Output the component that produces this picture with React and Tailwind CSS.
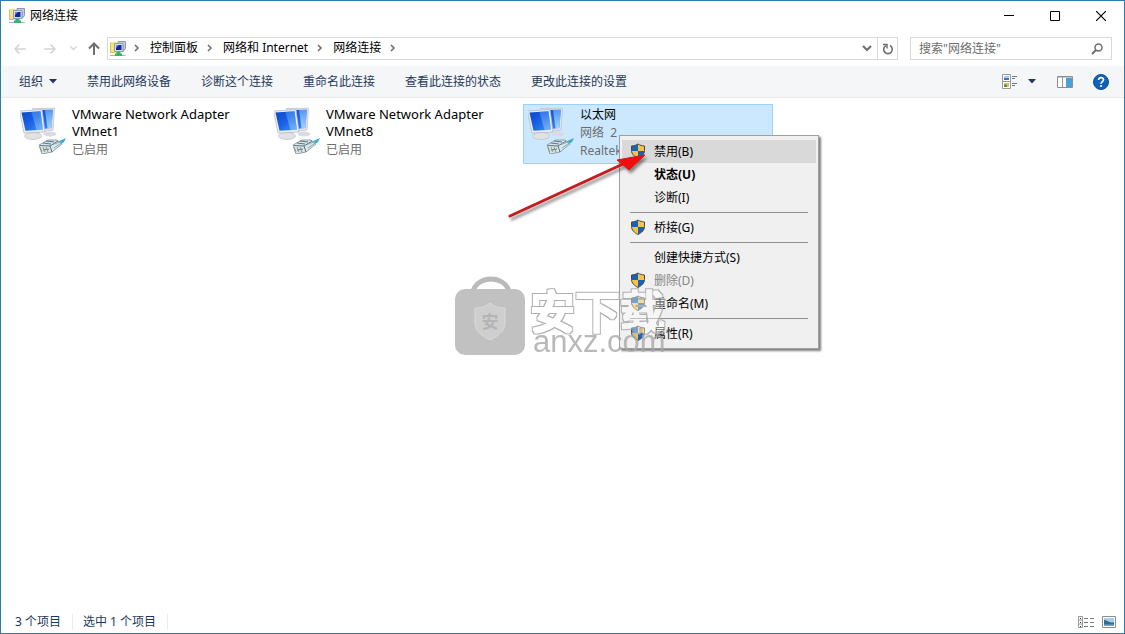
import React from 'react';

const crumbs = ['控制面板', '网络和 Internet', '网络连接'];
const commands = ['禁用此网络设备', '诊断这个连接', '重命名此连接', '查看此连接的状态', '更改此连接的设置'];

function FolderNetIcon() {
  return (
    <svg width="16" height="16" viewBox="0 0 16 16" className="shrink-0" aria-hidden="true">
      <path d="M0 1.500 5 .5l2 1v10.500H0z" fill="#f5e08a" />
      <path d="M.5 1.500v10h4" fill="none" stroke="#d9c05e" />
      <path d="M8 .500h7.500v7L13 10.500V4L8 3z" fill="#c3cbdd" stroke="#8b97b3" />
      <path d="M4.500 2.500h8.500v8H4.500z" fill="#d8e0f0" stroke="#8d99b8" />
      <path d="M6 4h5.500v5H6z" fill="#1722a0" />
      <path d="M6 4h3L6 7z" fill="#5c86e8" />
      <path d="M6.500 11h4v1.500H12v2.500H5v-2.500h1.500z" fill="#2fb56c" />
      <path d="M0 14.500h5M12 14.500h3.500" stroke="#a4b3b4" />
    </svg>
  );
}

function Shield() {
  return (
    <svg width="16" height="16" viewBox="0 1 16 16" className="shrink-0 overflow-visible" aria-hidden="true">
      <path d="M8 1C6 2.300 4 2.800 1.500 3v5H8z" fill="#1565b4" />
      <path d="M8 1c2 1.300 4 1.800 6.500 2v5H8z" fill="#f8c24c" />
      <path d="M1.500 8H8v7.500C4.500 13.800 1.600 11.400 1.500 8z" fill="#f8c24c" />
      <path d="M14.500 8H8v7.500c3.500-1.700 6.400-4.100 6.500-7.500z" fill="#1565b4" />
      <path d="M8 1C6 2.300 4 2.800 1.500 3v4.500C1.500 11 4.500 13.800 8 15.500c3.500-1.700 6.500-4.500 6.500-8V3C12 2.800 10 2.300 8 1z" fill="none" stroke="#4b4a44" />
    </svg>
  );
}

function AdapterIcon() {
  return (
    <svg width="48" height="48" viewBox="0 0 48 48" className="shrink-0" aria-hidden="true">
      <defs>
        <linearGradient id="screen" x1="0" y1="0" x2="1" y2="1">
          <stop offset="0" stopColor="#0b46c4" />
          <stop offset=".5" stopColor="#1a62e6" />
          <stop offset="1" stopColor="#3f97f5" />
        </linearGradient>
        <linearGradient id="glare" x1="0" y1="0" x2="0" y2="1">
          <stop offset="0" stopColor="#5fa8f8" />
          <stop offset="1" stopColor="#c4e3fd" />
        </linearGradient>
      </defs>
      <ellipse cx="30" cy="28" rx="6.500" ry="2.500" fill="#d9dbe0" />
      <path d="m12.500 2.500 22-.3-1.500 21.800-15 2z" fill="#e3e5ea" stroke="#bfc3cb" strokeWidth=".8" />
      <path d="m14 4 18.800-.3L31.500 22 18 23.500z" fill="url(#screen)" />
      <path d="m25 3.900 7.800-.2L31.500 22l-4 .5z" fill="url(#glare)" opacity=".8" />
      <path d="m10 25 8-1 1 5c-2 2-6 2-8 0z" fill="#b9bdc5" />
      <ellipse cx="13" cy="30" rx="8.500" ry="3.500" fill="#e0e2e6" stroke="#c1c5cc" strokeWidth=".8" />
      <path d="m-.5 5 22.500-1.500 3 22.500-21 1z" fill="#eceef1" stroke="#b8bdc7" strokeWidth=".8" />
      <path d="m1.500 6.500 19-1.300 2.500 18.500-17.500 1z" fill="url(#screen)" />
      <path d="m11.500 5.900 9-.7 2.500 18.500-6.500.4z" fill="url(#glare)" opacity=".42" />
      <path d="m37 36 9-4-2 4-6 4z" fill="#35acd6" />
      <path d="m19 39 9-5 9 0 5 4-10 8-10 2z" fill="#dbe6ea" stroke="#8499a3" strokeWidth=".9" />
      <path d="m20 39.500 10 .5 2 6M30 40l8-5M23 44l6-1M23 37l8 1M26 35l8 1" fill="none" stroke="#5b7482" />
      <path d="m33 38.500 8-3M34 42l8-5.500" stroke="#86adb9" />
      <path d="m20 41 2 5M23 41l2 5M26 41l2 5" stroke="#8d9b7b" />
    </svg>
  );
}

function Chevron() {
  return (
    <svg width="6" height="8" viewBox="0 0 6 8" className="shrink-0" aria-hidden="true">
      <path d="m1 1 3 3-3 3" fill="none" stroke="#6b6b6b" strokeWidth="1.500" />
    </svg>
  );
}

function Caret() {
  return (
    <svg width="8" height="5" viewBox="0 0 8 5" aria-hidden="true">
      <path d="M0 0h8L4 4.500z" fill="#1e395b" />
    </svg>
  );
}

function Adapter({ name, latin, lines, selected }) {
  return (
    <button
      className={
        'flex h-[60px] w-[250px] shrink-0 items-start border pl-1 pt-px text-left ' +
        (selected ? 'border-[#99d1ff] bg-[#cce8ff]' : 'border-transparent')
      }
    >
      <AdapterIcon />
      <span className="ml-1 flex flex-col gap-px text-xs text-[#6d6d6d]">
        <span className={'w-44 leading-[17px] text-black ' + (latin ? 'text-[13px]' : 'text-xs')}>{name}</span>
        {lines.map((l) => (
          <span key={l} className="whitespace-pre leading-[17px]">{l}</span>
        ))}
      </span>
    </button>
  );
}

function Item({ label, shield, bold, hot, disabled }) {
  return (
    <button
      role="menuitem"
      disabled={disabled}
      className={
        'flex h-[23px] w-full items-center gap-2 pl-2 text-left text-xs ' +
        (hot ? 'bg-[#d9d9d9] ' : '') +
        (bold ? 'font-bold ' : '') +
        (disabled ? 'text-[#858585]' : 'text-black')
      }
    >
      <span className="flex w-4">{shield && <Shield />}</span>
      {label}
    </button>
  );
}

function Separator() {
  return <div role="separator" className="mx-2 my-[3px] h-px bg-[#919191]" />;
}

function ContextMenu() {
  return (
    <div role="menu" className="absolute left-24 top-[31px] z-10 w-[200px] border border-[#a0a0a0] bg-[#f0f0f0] px-0.5 pb-[3px] pt-1 shadow-[2px_2px_2px_rgba(0,0,0,0.5)]">
      <Item label="禁用(B)" shield hot />
      <Item label="状态(U)" bold />
      <Item label="诊断(I)" />
      <Separator />
      <Item label="桥接(G)" shield />
      <Separator />
      <Item label="创建快捷方式(S)" />
      <Item label="删除(D)" shield disabled />
      <Item label="重命名(M)" shield />
      <Separator />
      <Item label="属性(R)" shield />
    </div>
  );
}

function Arrow() {
  return (
    <svg width="150" height="76" viewBox="0 0 150 76" className="pointer-events-none absolute -left-4 top-[46px] z-20" aria-hidden="true">
      <defs>
        <filter id="soft" x="-10%" y="-10%" width="120%" height="130%">
          <feDropShadow dx="2" dy="3" stdDeviation="1.500" floodOpacity=".45" />
        </filter>
      </defs>
      <g filter="url(#soft)">
        <path d="M3 66 116 14" stroke="#c51a1e" strokeWidth="3" strokeLinecap="round" />
        <path d="m138 5-28 5 5 4 7 6z" fill="#f20d0d" stroke="#c51a1e" />
      </g>
    </svg>
  );
}

function Watermark() {
  return (
    <svg width="220" height="88" viewBox="0 0 220 88" className="pointer-events-none absolute left-[452px] top-[172px] z-20" aria-hidden="true">
      <defs>
        <filter id="ring" x="-5%" y="-10%" width="110%" height="120%">
          <feMorphology in="SourceAlpha" operator="dilate" radius="2" result="outer" />
          <feMorphology in="SourceAlpha" operator="dilate" radius="1" result="inner" />
          <feFlood floodColor="#b0b0b0" result="grey" />
          <feComposite in="grey" in2="outer" operator="in" result="band" />
          <feComposite in="band" in2="inner" operator="out" result="edge" />
          <feFlood floodColor="#ffffff" floodOpacity=".4" />
          <feComposite in2="inner" operator="in" result="body" />
          <feMerge>
            <feMergeNode in="body" />
            <feMergeNode in="edge" />
          </feMerge>
        </filter>
      </defs>
      <path d="M20 21c5-16 31-16 36 0" fill="none" stroke="#bababa" strokeWidth="5" />
      <rect x="2" y="19" width="70" height="66" rx="10" fill="#c1c1c1" />
      <path d="M37 33c-5 4-10 5-15 5v15c0 8 7 13 15 17 8-4 15-9 15-17V38c-5 0-10-1-15-5z" fill="#cecece" stroke="#dadada" />
      <text x="37" y="58" textAnchor="middle" fontSize="17" fontWeight="700" fill="#b4b4b4">安</text>
      <text x="77" y="59" fontSize="45" fontWeight="500" filter="url(#ring)">安下载</text>
      <text x="80" y="82" fontSize="31" fontFamily="Liberation Sans, sans-serif" fill="#a8a8a8" opacity=".8">anxz.com</text>
    </svg>
  );
}

export default function App() {
  return (
    <div className="flex min-h-screen flex-col border border-[#2b7cb3] bg-white font-['Noto_Sans','Noto_Sans_CJK_SC',sans-serif] text-xs text-black">
      <header className="flex h-[30px] items-center pl-2">
        <FolderNetIcon />
        <h1 className="ml-[5px]">网络连接</h1>
        <div className="ml-auto flex h-full">
          <button aria-label="最小化" className="flex w-[46px] items-center justify-center">
            <svg width="10" height="10" viewBox="0 0 10 10"><path d="M0 4.500h10" stroke="#000" /></svg>
          </button>
          <button aria-label="最大化" className="flex w-[46px] items-center justify-center">
            <svg width="10" height="10" viewBox="0 0 10 10"><path d="M.5.5h9v9h-9z" fill="none" stroke="#000" /></svg>
          </button>
          <button aria-label="关闭" className="flex w-[46px] items-center justify-center">
            <svg width="10" height="10" viewBox="0 0 10 10"><path d="m0 0 10 10M10 0 0 10" stroke="#000" strokeWidth="1.200" /></svg>
          </button>
        </div>
      </header>

      <nav className="flex h-[35px] items-center pl-3 pr-3">
        <button aria-label="后退" className="w-[30px]">
          <svg width="14" height="12" viewBox="0 0 14 12"><path d="M13 6H2M6.500 1.500 2 6l4.500 4.500" fill="none" stroke="#d5d5d5" strokeWidth="1.600" /></svg>
        </button>
        <button aria-label="前进" className="w-[27px]">
          <svg width="14" height="12" viewBox="0 0 14 12"><path d="M1 6h11M7.500 1.500 12 6l-4.500 4.500" fill="none" stroke="#d5d5d5" strokeWidth="1.600" /></svg>
        </button>
        <button aria-label="最近浏览的位置" className="w-[18px]">
          <svg width="7" height="5" viewBox="0 0 7 5"><path d="m.5.5 3 3 3-3" fill="none" stroke="#d5d5d5" strokeWidth="1.500" /></svg>
        </button>
        <button aria-label="向上" className="w-[19px]">
          <svg width="13" height="13" viewBox="0 0 13 13"><path d="M6 13V2M1 6.500l5-5 5 5" fill="none" stroke="#6e6e6e" strokeWidth="2" /></svg>
        </button>
        <div className="flex h-[23px] flex-1 items-center border border-[#d9d9d9] pl-0.5">
          <FolderNetIcon />
          <span className="ml-2 flex items-center gap-[9px] pb-0.5">
            <Chevron />
            {crumbs.map((c) => (
              <React.Fragment key={c}>
                <a href="#" className="ml-px">{c}</a>
                <Chevron />
              </React.Fragment>
            ))}
          </span>
          <button aria-label="展开" className="ml-auto flex w-5 justify-center">
            <svg width="10" height="7" viewBox="0 0 10 7"><path d="m1 1 4 4 4-4" fill="none" stroke="#6e6e6e" strokeWidth="2" /></svg>
          </button>
          <button aria-label="刷新" className="flex h-full w-5 items-center justify-center border-l border-[#d9d9d9]">
            <svg width="12" height="12" viewBox="0 0 12 12">
              <path d="M3.800 2.600A4.300 4.300 0 1 0 8 2.500" fill="none" stroke="#6e6e6e" strokeWidth="1.600" />
              <path d="M1 1.500h4V5.500" fill="none" stroke="#6e6e6e" strokeWidth="1.500" />
            </svg>
          </button>
        </div>
        <label className="ml-3 flex h-[23px] w-[202px] items-center border border-[#d9d9d9] pl-2 pr-2">
          <input aria-label="搜索" placeholder={'搜索"网络连接"'} className="min-w-0 flex-1 outline-none placeholder:text-[#6d6d6d]" />
          <svg width="12" height="12" viewBox="0 0 12 12" aria-hidden="true"><circle cx="7.500" cy="4.500" r="3.500" fill="none" stroke="#6e6e6e" strokeWidth="1.500" /><path d="M5 7 1 11" stroke="#6e6e6e" strokeWidth="2" /></svg>
        </label>
      </nav>

      <div role="toolbar" className="flex h-8 items-center border-b border-[#e6e8ea] bg-[#f5f6f7] pl-[18px] pr-[15px] text-[#1e395b]">
        <button className="mr-[30px] flex items-center gap-1.5">组织<Caret /></button>
        <div className="flex gap-[30px]">
          {commands.map((c) => (
            <button key={c}>{c}</button>
          ))}
        </div>
        <div className="ml-auto flex items-center">
          <button aria-label="更改视图">
            <svg width="16" height="16" viewBox="0 0 16 16">
              <path d="M.5.5h8v14h-8zM.5 7.500h8" fill="#fff" stroke="#9a9a9a" />
              <path d="M2 2h5v4H2z" fill="#a9cdec" />
              <path d="M2 4h5v2H2z" fill="#3f79b3" />
              <path d="M2 9h5v4H2z" fill="#d9c66a" />
              <path d="M2 10.500h3V13H2z" fill="#5f8f45" />
              <path d="M10 2.500h5M10 4.500h3M10 9.500h5M10 11.500h3" stroke="#6f7884" />
            </svg>
          </button>
          <button aria-label="更多选项" className="ml-2.5"><Caret /></button>
          <button aria-label="预览窗格" className="ml-[21px]">
            <svg width="16" height="12" viewBox="0 0 16 12">
              <path d="M.5.500h15v11H.5z" fill="#fff" stroke="#8a8f96" />
              <path d="M1 1h14" stroke="#8a8f96" />
              <path d="M5.500 1v10" stroke="#9a9a9a" />
              <path d="M9 2h6v9H9z" fill="#4a9fdb" />
            </svg>
          </button>
          <button aria-label="帮助" className="ml-5">
            <svg width="16" height="16" viewBox="0 0 16 16">
              <circle cx="8" cy="8" r="7.500" fill="#0f62b8" stroke="#0b4d95" />
              <path d="M5.600 6c0-3.200 4.900-3 4.900-.2C10.500 7.600 8 7.600 8 9.800" fill="none" stroke="#fff" strokeWidth="1.700" />
              <circle cx="8" cy="12" r="1.100" fill="#fff" />
            </svg>
          </button>
        </div>
      </div>

      <main className="relative flex-1 pl-3.5 pt-1.5">
        <div className="flex gap-1">
          <Adapter name="VMware Network Adapter VMnet1" latin lines={['已启用']} />
          <Adapter name="VMware Network Adapter VMnet8" latin lines={['已启用']} />
          <div className="relative">
            <Adapter name="以太网" lines={['网络  2', 'Realtek']} selected />
            <ContextMenu />
            <Arrow />
          </div>
        </div>
        <Watermark />
      </main>

      <footer className="flex h-6 items-center pl-3.5 pr-2 pt-0.5 text-[#1e395b]">
        <span>3 个项目</span>
        <span className="ml-[11px] h-4 w-px bg-[#ececec]" />
        <span className="ml-[10px]">选中 1 个项目</span>
        <span className="ml-[11px] h-4 w-px bg-[#ececec]" />
        <div className="ml-auto flex items-center gap-2">
          <button aria-label="详细信息">
            <svg width="16" height="12" viewBox="0 0 16 12">
              <path d="M.5.5h4v11h-4zM.5 4h4M.5 8h4" fill="none" stroke="#9a9a9a" />
              <path d="M6 2.500h4M12 2.500h4M6 6.500h4M12 6.500h4M6 10.500h4M12 10.500h4" stroke="#7a7a7a" />
              <path d="M2 2.500h1M2 6.500h1M2 10.500h1" stroke="#333" />
            </svg>
          </button>
          <button aria-label="大图标">
            <svg width="14" height="12" viewBox="0 0 14 12">
              <path d="M.5.5h13v11H.5z" fill="#fff" stroke="#8d8d8d" />
              <path d="M2 2h10v8H2z" fill="#a6cdea" />
              <path d="M2 4c3 0 5 3 10 2.500V10H2z" fill="#2f6e8e" />
              <path d="M2 8.500h10V10H2z" fill="#78a6c4" />
            </svg>
          </button>
        </div>
      </footer>
    </div>
  );
}
